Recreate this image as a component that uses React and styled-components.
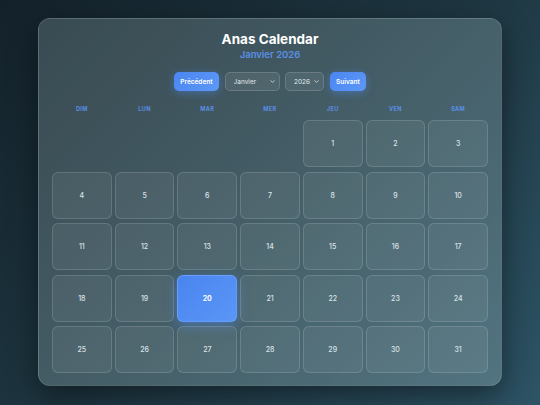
import styled, { createGlobalStyle } from "styled-components";
import { ChevronDown } from "lucide-react";

const GlobalStyle = createGlobalStyle`
  * { box-sizing: border-box; }
  body {
    margin: 0;
    font-family: Inter, "Noto Sans", sans-serif;
  }
`;

const Page = styled.div`
  width: 540px;
  height: 405px;
  padding: 18px 38px 19px;
  background: linear-gradient(135deg, #13212a 0%, #1e3641 50%, #2d5466 100%);
`;

const Card = styled.div`
  height: 368px;
  border-radius: 12px;
  padding: 12px 13px 12px;
  background: linear-gradient(135deg, rgba(70, 88, 95, 0.75), rgba(98, 132, 142, 0.7));
  border: 1px solid rgba(255, 255, 255, 0.12);
  box-shadow: 0 10px 30px rgba(0, 0, 0, 0.45);
  display: flex;
  flex-direction: column;
  align-items: center;
`;

const Title = styled.h1`
  margin: 0;
  font-size: 13.5px;
  line-height: 16px;
  font-weight: 700;
  color: #ffffff;
`;

const Subtitle = styled.h2`
  margin: 1.5px 0 0;
  font-size: 9.5px;
  line-height: 12px;
  font-weight: 600;
  color: #5a8fe6;
`;

const Controls = styled.div`
  margin-top: 11.5px;
  display: flex;
  gap: 5.5px;
  align-items: center;
`;

const NavButton = styled.button`
  height: 19px;
  padding: 0 ${(p) => p.$pad}px;
  border: none;
  border-radius: 5px;
  background: linear-gradient(135deg, #4b86f2, #5d97f7);
  color: #ffffff;
  font-family: inherit;
  font-size: 6.5px;
  font-weight: 600;
  box-shadow: 0 2px 8px rgba(77, 139, 245, 0.45);
`;

const SelectWrap = styled.div`
  position: relative;
  display: flex;
`;

const Select = styled.select`
  appearance: none;
  height: 19px;
  width: ${(p) => p.$w}px;
  padding: 0 0 0 ${(p) => p.$pl}px;
  border-radius: 5px;
  border: 1px solid rgba(255, 255, 255, 0.15);
  background: rgba(255, 255, 255, 0.08);
  color: #e6ecef;
  font-family: inherit;
  font-size: 6.5px;
  outline: none;
`;

const Chevron = styled(ChevronDown)`
  position: absolute;
  right: 4px;
  top: 6px;
  color: #e6ecef;
  pointer-events: none;
`;

const Weekdays = styled.div`
  margin-top: 13px;
  width: 100%;
  display: grid;
  grid-template-columns: repeat(7, 1fr);
  column-gap: 3px;
`;

const Weekday = styled.div`
  text-align: center;
  font-size: 5.5px;
  line-height: 10px;
  font-weight: 700;
  letter-spacing: 0.4px;
  color: #5a8fe6;
`;

const Grid = styled.div`
  margin-top: 6px;
  width: 100%;
  display: grid;
  grid-template-columns: repeat(7, 1fr);
  grid-auto-rows: 47px;
  column-gap: 3px;
  row-gap: 4.5px;
`;

const Day = styled.div`
  display: flex;
  align-items: center;
  justify-content: center;
  border-radius: 6px;
  font-size: 7px;
  font-weight: ${(p) => (p.$today ? 700 : 500)};
  color: ${(p) => (p.$today ? "#ffffff" : "#dbe3e7")};
  background: ${(p) =>
    p.$today
      ? "linear-gradient(135deg, #4a85f0, #5a96f6)"
      : "rgba(255, 255, 255, 0.06)"};
  border: 1px solid
    ${(p) => (p.$today ? "rgba(120, 170, 255, 0.6)" : "rgba(255, 255, 255, 0.14)")};
  box-shadow: ${(p) => (p.$today ? "0 3px 12px rgba(77, 139, 245, 0.5)" : "none")};
`;

const Empty = styled.div``;

const weekdays = ["DIM", "LUN", "MAR", "MER", "JEU", "VEN", "SAM"];
const offset = 4;
const days = Array.from({ length: 31 }, (_, i) => i + 1);

export default function App() {
  return (
    <>
      <GlobalStyle />
      <Page>
        <Card>
          <Title>Anas Calendar</Title>
          <Subtitle>Janvier 2026</Subtitle>
          <Controls>
            <NavButton $pad={6.5}>Précédent</NavButton>
            <SelectWrap>
              <Select $w={55} $pl={8} defaultValue="0">
                <option value="0">Janvier</option>
                <option value="1">Février</option>
              </Select>
              <Chevron size={7} strokeWidth={2.5} />
            </SelectWrap>
            <SelectWrap>
              <Select $w={39} $pl={8} defaultValue="2026">
                <option value="2026">2026</option>
              </Select>
              <Chevron size={7} strokeWidth={2.5} />
            </SelectWrap>
            <NavButton $pad={6.5}>Suivant</NavButton>
          </Controls>
          <Weekdays>
            {weekdays.map((w) => (
              <Weekday key={w}>{w}</Weekday>
            ))}
          </Weekdays>
          <Grid>
            {Array.from({ length: offset }, (_, i) => (
              <Empty key={"e" + i} />
            ))}
            {days.map((d) => (
              <Day key={d} $today={d === 20}>
                {d}
              </Day>
            ))}
          </Grid>
        </Card>
      </Page>
    </>
  );
}
